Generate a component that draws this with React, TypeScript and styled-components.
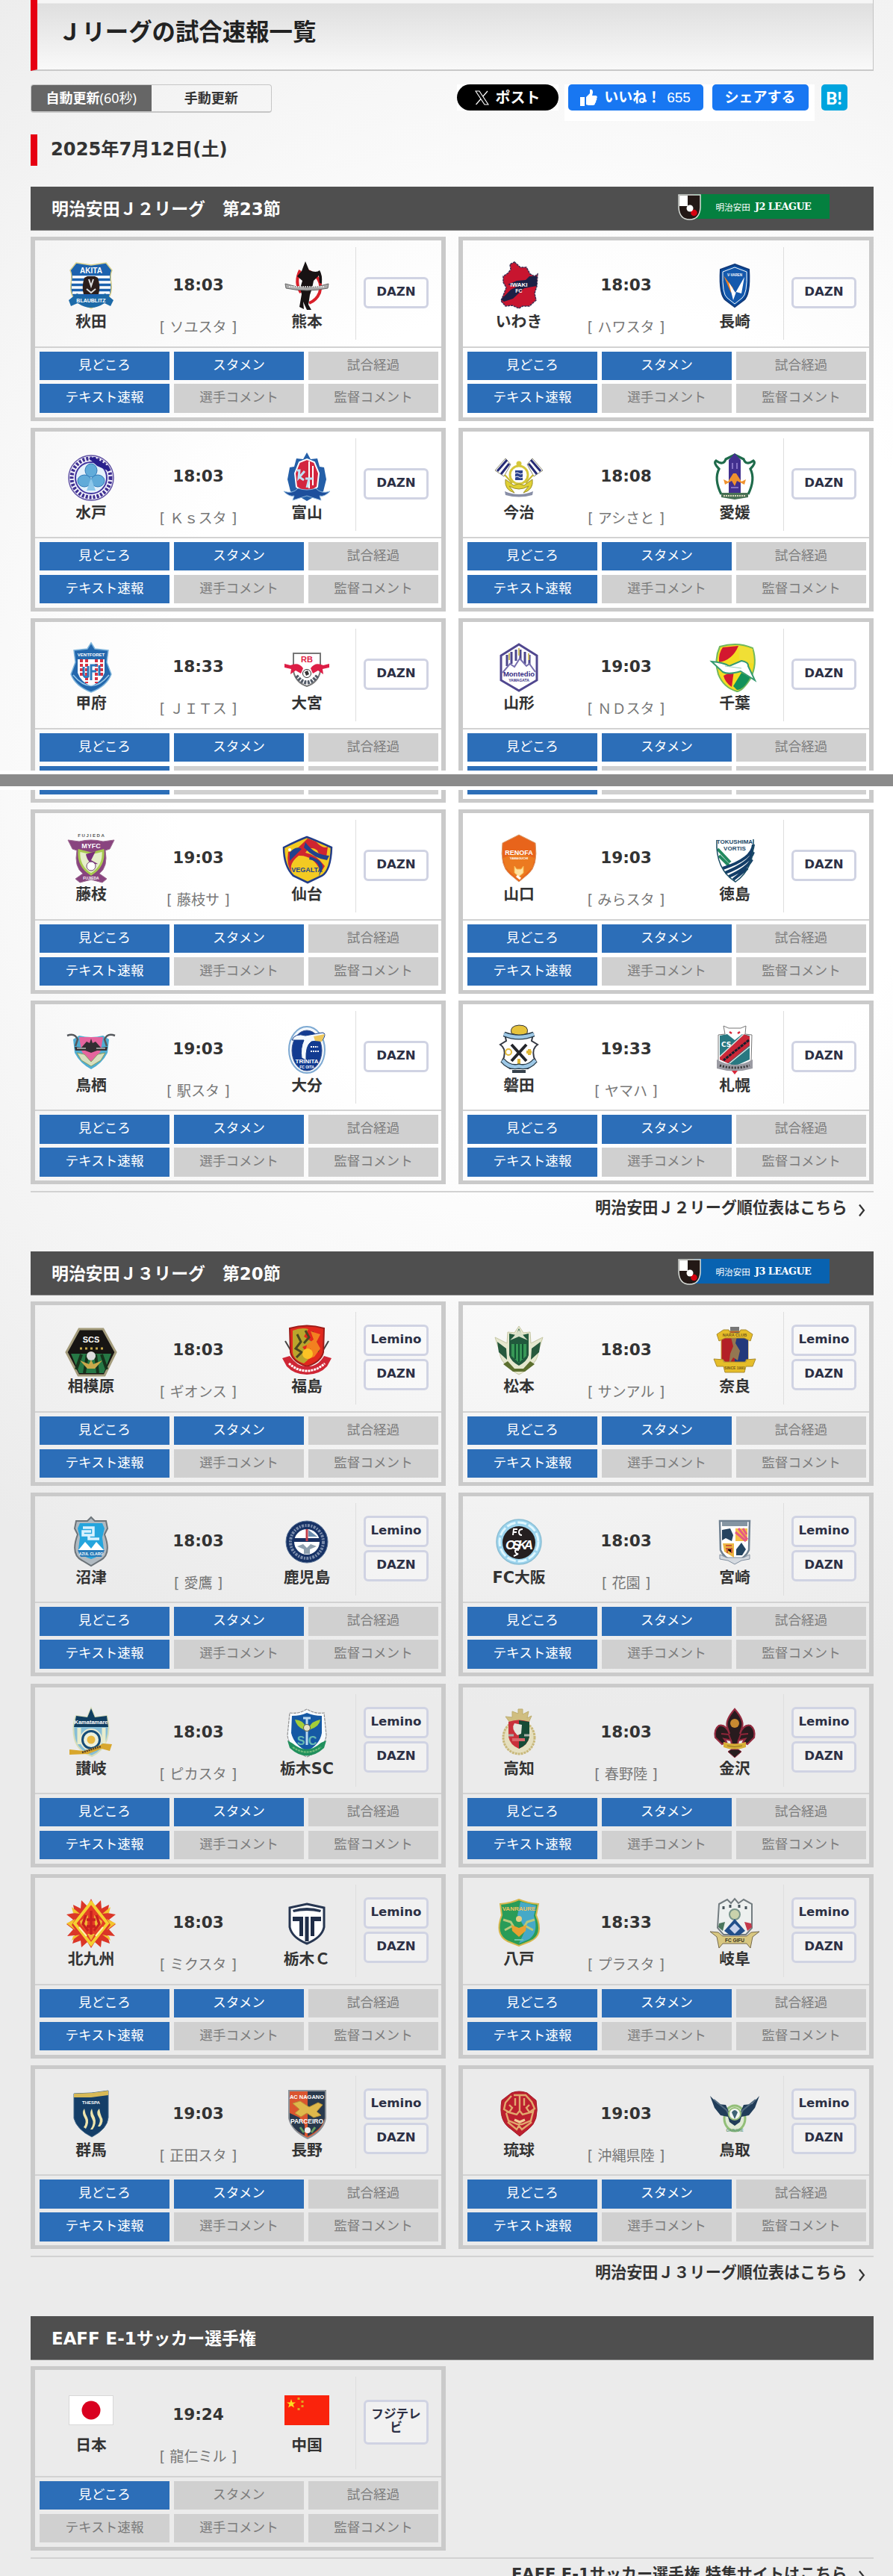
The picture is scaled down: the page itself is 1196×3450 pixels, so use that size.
import React from 'react';
import styled, { createGlobalStyle } from 'styled-components';

// Global styles
const GlobalStyle = createGlobalStyle`
  * {
    box-sizing: border-box;
  }

  body {
    margin: 0;
    font-family: 'DejaVu Sans', 'Noto Sans CJK JP', sans-serif;
    color: #333;
    background: #ebebeb;
  }
`;

const Page = styled.div`
  position: relative;
  height: 3450px;
  overflow: hidden;
  padding: 0 26.5px 0 41px;
  background: radial-gradient(ellipse 1280px 1330px at 760px 960px, #fff 0%, #fff 42%, #ebebeb 100%);
`;

const TitleBar = styled.header`
  height: 95px;
  padding-top: 5px;
  border-left: 9px solid #e60012;
  border-right: 1px solid #c4c4c4;
  border-bottom: 2px solid #c9c9c9;
  background: linear-gradient(#f6f6f6 0, #f6f6f6 4px, #dfdfdf 5px, #ececec 50px, #f9f9f9 100%);
`;

const Title = styled.h1`
  margin: 0;
  padding-left: 28px;
  font-size: 31.4px;
  line-height: 76px;
  font-weight: bold;
  color: #222;
`;

const Toolbar = styled.div`
  display: flex;
  justify-content: space-between;
  align-items: flex-start;
  height: 38px;
  margin-top: 18px;
  padding-right: 35px;
`;

const Toggle = styled.div`
  display: flex;
  width: 323px;
  height: 38px;
  border: 1px solid #c6c6c6;
  border-bottom-width: 2px;
  border-radius: 4px;
  overflow: hidden;
`;

const ToggleItem = styled.div<{ $active?: boolean }>`
  flex: 1;
  text-align: center;
  font-size: 18px;
  line-height: 35px;
  font-weight: bold;
  background: ${({ $active }) => ($active ? '#666' : 'transparent')};
  color: ${({ $active }) => ($active ? '#fff' : '#333')};

  span {
    font-family: 'Noto Sans', 'Noto Sans CJK JP', sans-serif;
    font-weight: normal;
  }
`;

const Shares = styled.div`
  display: flex;
  align-items: flex-start;
`;

const PostBack = styled.div`
  background: #fff;
  margin-right: 8px;
`;

const PostButton = styled.div`
  display: flex;
  align-items: center;
  gap: 9px;
  width: 136px;
  height: 35px;
  padding-left: 24px;
  border-radius: 18px;
  background: #000;
  color: #fff;
  font-size: 20px;
  font-weight: bold;
  line-height: 32px;
`;

const FacebookBack = styled.div`
  display: flex;
  align-items: flex-start;
  gap: 12px;
  width: 335px;
  height: 49px;
  padding-left: 5px;
  margin-right: 9px;
  background: #fff;
`;

const FacebookButton = styled.div<{ $width: number }>`
  display: flex;
  align-items: center;
  justify-content: center;
  width: ${({ $width }) => $width}px;
  height: 35px;
  border-radius: 5px;
  background: #1877f2;
  color: #fff;
  font-size: 19px;
  font-weight: bold;
  line-height: 33px;

  svg {
    margin-right: 9px;
  }

  em {
    margin-left: 8px;
    font: normal 19px 'Liberation Sans', sans-serif;
  }
`;

const Hatena = styled.div`
  width: 35px;
  height: 35px;
  border-radius: 5px;
  background: #00a4de;
  color: #fff;
  text-align: center;
  font: 900 23px/36px 'Lato', 'Liberation Sans', sans-serif;
`;

const DateHeading = styled.h2`
  margin: 29px 0 28px;
  padding-left: 18px;
  height: 42px;
  border-left: 9px solid #e60012;
  font-size: 24.2px;
  line-height: 41px;
  font-weight: bold;
`;

const Section = styled.section`
  height: 1426.2px;
`;

const SectionHeader = styled.h3`
  display: flex;
  align-items: center;
  justify-content: space-between;
  height: 59px;
  margin: 0 0 8px;
  padding: 0 59px 3px 28px;
  background: #4f4f4f;
  border-bottom: 1px solid #888;
  color: #fff;
  font-size: 22.9px;
  font-weight: bold;
`;

const LeagueBadge = styled.div<{ $color: string }>`
  display: flex;
  align-items: center;
  width: 203px;
  height: 36px;

  svg {
    flex: none;
    position: relative;
    z-index: 1;
    margin-right: -10px;
  }

  div {
    flex: 1;
    display: flex;
    align-items: center;
    gap: 6px;
    height: 33px;
    margin-top: -2px;
    padding-left: 30px;
    background: ${({ $color }) => $color};
    font-size: 11.6px;
    font-weight: normal;
    white-space: nowrap;
  }

  b {
    font: bold 12.8px 'DejaVu Serif', serif;
    letter-spacing: -0.5px;
  }
`;

const Cards = styled.div`
  display: grid;
  grid-template-columns: 556px 556px;
  column-gap: 17px;
  row-gap: 9.2px;
`;

const Card = styled.article`
  height: 246.5px;
  border: solid #cacaca;
  border-width: 5px 6px;
`;

const Summary = styled.div`
  display: flex;
  height: 143.5px;
  padding-left: 10px;
  border-bottom: 2px solid #d2d2d2;
`;

const Team = styled.div`
  width: 130px;
  padding-top: 28px;
  text-align: center;
  font-size: 20.8px;
  line-height: 30px;
  font-weight: bold;
  white-space: nowrap;

  svg {
    display: block;
    margin: 0 auto;
    overflow: visible;
  }
`;

const Kickoff = styled.div`
  width: 157px;
  margin-right: 2px;
  padding-top: 45px;
  text-align: center;
`;

const Time = styled.div`
  font-size: 21.6px;
  line-height: 30px;
  font-weight: bold;
`;

const Venue = styled.div`
  margin-top: 27px;
  color: #777;
  font-size: 19.1px;
  line-height: 30px;
  white-space: nowrap;
`;

const Broadcasts = styled.div`
  display: flex;
  flex-direction: column;
  justify-content: center;
  gap: 4px;
  width: 114px;
  height: 124px;
  margin-top: 9px;
  padding: 0 16px 2px 10px;
  border-left: 1px solid #dedede;
`;

const Broadcaster = styled.div`
  padding: 8px 4px 10px;
  border: 3px solid #d0d3e3;
  border-radius: 6px;
  background: rgba(255, 255, 255, 0.3);
  color: #2c3045;
  text-align: center;
  font-size: 16.6px;
  line-height: 18px;
  font-weight: bold;
`;

const Tabs = styled.div`
  display: grid;
  grid-template-columns: repeat(3, 1fr);
  grid-auto-rows: 38.3px;
  gap: 5.7px 6px;
  padding: 5px 4px 0 6px;
`;

const Tab = styled.div<{ $active: boolean }>`
  text-align: center;
  font-size: 17.6px;
  line-height: 36px;
  background: ${({ $active }) => ($active ? '#2c6eb8' : '#d0d0d0')};
  color: ${({ $active }) => ($active ? '#fff' : '#7c7c7c')};
`;

const MoreLink = styled.div`
  display: flex;
  align-items: center;
  justify-content: flex-end;
  gap: 14px;
  margin-top: 9px;
  padding: 5px 11px 0 0;
  border-top: 2px solid #d2d2d2;
  font-size: 21.1px;
  line-height: 32px;
  font-weight: bold;

  svg {
    margin-top: 6px;
  }
`;

// Strip laid over the third row of cards
const PageBreak = styled.div`
  position: absolute;
  left: 0;
  right: 0;
  top: 1032px;
  height: 26px;
  border: solid #fff;
  border-width: 5px 0;
  background: #8b8b8b;
`;

const Word: React.FC<{ y: number; size?: number; fill?: string; children: string }> = ({ y, size = 8, fill = '#fff', children }) => (
  <text x="33" y={y} textAnchor="middle" fontFamily="Liberation Sans, sans-serif" fontWeight="bold" fontSize={size} fill={fill}>
    {children}
  </text>
);

const crests: Record<string, React.ReactNode> = {
  秋田: (
    <>
      <path d="M13 2L33 5L53 2L61 12Q58 18 60 30Q62 48 50 54L33 63L16 54Q4 48 6 30Q8 18 5 12Z" fill="#1c62ae" stroke="#d8cf8a" strokeWidth="1.5" />
      <path d="M8 21H58M7 28H59M7 35H59M8 42H58" stroke="#fff" strokeWidth="3.5" />
      <path d="M24 22L28 20H38L42 22Q46 34 43 44H23Q20 34 24 22" fill="#2b1d1a" />
      <path d="M30 24L33 33L36 24M27 37L33 42L39 37" stroke="#ddd" strokeWidth="2" fill="none" />
      <path d="M3 52L14 43Q33 53 52 43L63 52L59 60L51 56Q33 68 15 56L6 60Z" fill="#1d6aa8" />
      <Word y={16} size={10}>AKITA</Word>
      <Word y={55} size={7}>BLAUBLITZ</Word>
    </>
  ),
  熊本: (
    <>
      <path d="M24 12Q16 28 25 42M33 12Q56 22 50 42Q46 52 36 56" fill="none" stroke="#d91f2a" strokeWidth="4" />
      <path d="M31 0L36 12Q46 16 50 12Q54 18 53 30L50 29L49 19L42 26L40 36L37 45L35 58L39 65H33L28 54L29 64L23 61L26 44L24 36L27 26L20 20L26 13Z" fill="#171213" />
      <path d="M4 30Q33 40 62 30L61 36Q33 42 5 36Z" fill="#aaa" stroke="#666" />
      <path d="M9 34H57" stroke="#eee" strokeWidth="1.5" strokeDasharray="2 1" />
    </>
  ),
  いわき: (
    <>
      <path d="M27 1L35 8H43L48 17L54 20L58 17L57 33L54 43L56 52L47 60L38 60L33 63L24 59L15 60L9 53L13 43L16 35L12 28L12 20L18 16L22 11L21 4Z" fill="#c8152f" stroke="#3b3155" strokeWidth="1.5" strokeDasharray="3 1" />
      <path d="M9 51L22 38L30 34L18 31L30 26L42 25L47 20L57 20V33L40 36L25 50L13 54Z" fill="#1c2045" />
      <Word y={34} size={8}>IWAKI</Word>
      <Word y={42} size={7}>FC</Word>
    </>
  ),
  長崎: (
    <>
      <path d="M33 4L52 11Q54 45 45 52L33 61L21 52Q12 45 14 11Z" fill="#0a4fa2" stroke="#123a7a" strokeWidth="2" />
      <path d="M33 8L49 14Q50 44 43 49L33 57L23 49Q16 44 17 14Z" fill="#1459ad" stroke="#fff" strokeWidth="1" />
      <path d="M18 19L31 36L28 42Z" fill="#f07f1f" />
      <path d="M25 28L34 42L46 21L42 43L35 41L31 52Z" fill="#fff" />
      <Word y={20} size={4.5}>V·VAREN</Word>
    </>
  ),
  水戸: (
    <>
      <circle cx="33" cy="34" r="30" fill="#f3f2fb" stroke="#6153a4" strokeWidth="1.5" />
      <circle cx="33" cy="34" r="26" fill="none" stroke="#3e2f91" strokeWidth="5" strokeDasharray="3 2" />
      <circle cx="33" cy="34" r="21" fill="#e5f1fb" stroke="#4336a0" strokeWidth="2" />
      <g fill="#61abd9" stroke="#2f79b8" strokeWidth="1">
        <ellipse cx="33" cy="24" rx="8" ry="9" />
        <ellipse cx="24" cy="38" rx="9" ry="8" />
        <ellipse cx="42" cy="38" rx="9" ry="8" />
      </g>
      <path d="M33 34L27 51H39Z" fill="#8dc8ea" />
      <path d="M37 6L58 20L57 25L41 18L30 8Z" fill="#281f8d" />
    </>
  ),
  富山: (
    <>
      <path d="M33 0L38 9L47 8L50 19L56 20L59 36L55 52L33 65L11 52L7 36L10 20L16 19L19 8L28 9Z" fill="#245fa8" />
      <path d="M33 9L43 13L49 28L47 46L33 56L19 46L17 28L23 13Z" fill="#d3263f" stroke="#fff" strokeWidth="2" />
      <path d="M36 12V48M41 18V44" stroke="#fff" strokeWidth="2" />
      <path d="M20 24L23 24L22 34L30 25M23 33L29 37M31 35H41M36 35L33 47" fill="none" stroke="#bfe2f5" strokeWidth="3" />
      <path d="M2 52Q14 56 21 48Q33 52 45 48Q52 56 64 52Q56 60 50 58L52 64L33 58L14 64L16 58Q10 60 2 52" fill="#1d4f9c" stroke="#8cb6dc" />
    </>
  ),
  今治: (
    <>
      <path d="M1 24L15 8L22 16L13 32ZM65 24L51 8L44 16L53 32Z" fill="#fff" stroke="#8b8970" strokeWidth="1" />
      <path d="M4 25L17 10M9 29L20 15M62 25L49 10M57 29L46 15" stroke="#262b75" strokeWidth="3" />
      <path d="M14 30L24 41M52 30L42 41" stroke="#c6b62c" strokeWidth="2" />
      <circle cx="33" cy="30" r="12" fill="#fff" stroke="#d6c73a" strokeWidth="3" />
      <path d="M28 24H38V37H28Z" fill="#2c438e" />
      <path d="M28 28Q31 26 33 28T38 28M28 33Q31 31 33 33T38 33" stroke="#fff" fill="none" />
      <path d="M15 36Q13 50 27 54L20 45Q33 53 46 45L39 54Q53 50 51 36L40 44L33 42L26 44Z" fill="#e0d034" stroke="#9c902a" />
      <path d="M14 52Q33 60 52 52L51 57Q33 62 15 57Z" fill="#888ea6" />
      <circle cx="33" cy="15" r="3.5" fill="#d6c73a" />
    </>
  ),
  愛媛: (
    <>
      <path d="M15 13L22 10L33 2L44 10L51 13Q44 36 50 56H16Q22 36 15 13Z" fill="#fff" />
      <path d="M15 56Q5 36 12 22Q4 14 8 11Q18 18 21 9L33 3L45 9Q48 18 58 11Q62 14 54 22Q61 36 51 56" fill="none" stroke="#1f6b4b" strokeWidth="3.2" />
      <path d="M25 10L33 1L41 10V55H25Z" fill="#42308f" />
      <path d="M30 14V22M36 14V22M28 47H38" stroke="#8572c4" strokeWidth="2" />
      <path d="M18 36L24 39L31 28H35L42 39L48 36L46 43L36 38L33 45L29 38L20 43Z" fill="#f0922e" />
      <path d="M15 54H51V60L33 63L15 60Z" fill="#4a7256" />
      <path d="M18 58H48" stroke="#d8d6b8" strokeWidth="2" strokeDasharray="2 1" />
    </>
  ),
  甲府: (
    <>
      <path d="M33 0L38 8L56 10L54 26L60 42Q54 58 33 66Q12 58 6 42L12 26L10 10L28 8Z" fill="#2468ad" stroke="#7fb5dc" strokeWidth="1.5" />
      <path d="M15 22H51V40Q47 52 33 58Q19 52 15 40Z" fill="#fff" />
      <path d="M20 22V46M27 22V54M40 22V54M47 22V46" stroke="#d83344" strokeWidth="4" strokeDasharray="4 2" />
      <path d="M23 32V43Q24 47 29 45V31M33 50V30H41M33 38H40M44 30V44" fill="none" stroke="#2a77bd" strokeWidth="3" />
      <path d="M9 43Q33 72 57 43" fill="none" stroke="#9dcbea" strokeWidth="1.5" />
      <Word y={18} size={6}>VENTFORET</Word>
    </>
  ),
  大宮: (
    <>
      <path d="M15 14H51V38Q48 53 33 58Q18 53 15 38Z" fill="#fff" stroke="#777" strokeWidth="2" />
      <Word y={26} size={11} fill="#e02246">RB</Word>
      <path d="M3 28L11 30Q22 25 28 34L25 41L18 37L11 42L12 35L3 33ZM63 28L55 30Q44 25 38 34L41 41L48 37L55 42L54 35L63 33Z" fill="#dd1e46" />
      <circle cx="33" cy="41" r="5.5" fill="#fff" stroke="#333" />
      <path d="M30 39L34 37L36 42L32 44Z" fill="#333" />
      <path d="M19 44Q33 62 47 44" fill="none" stroke="#535b68" strokeWidth="5" strokeDasharray="3 1.5" />
    </>
  ),
  山形: (
    <>
      <path d="M33 2L57 17V50L33 64L9 50V17Z" fill="#fff" stroke="#50478f" strokeWidth="3" />
      <path d="M17 16V31M23 12V28M29 9V24M35 9V24M41 12V28M47 16V31" stroke="#4c468c" strokeWidth="3" />
      <path d="M20 14V23M33 7V17M46 14V23" stroke="#cdbc68" strokeWidth="2" />
      <path d="M11 40L21 28L27 32L34 21L43 31L47 28L55 39" fill="#fff" stroke="#776fae" strokeWidth="2" />
      <Word y={45} size={9.5} fill="#382d83">Montedio</Word>
      <Word y={52} size={5} fill="#382d83">YAMAGATA</Word>
    </>
  ),
  千葉: (
    <>
      <path d="M13 5Q37-2 57 7Q64 28 54 48Q43 65 36 65Q18 60 11 42Q5 23 13 5Z" fill="#f4dd22" stroke="#70b85d" strokeWidth="2" />
      <path d="M17 6L38 4Q30 23 12 26Q11 14 17 6Z" fill="#d3182f" />
      <path d="M38 4L57 8L58 28L39 22Z" fill="#f0df35" />
      <path d="M18 44L32 37L29 59Q20 53 18 44Z" fill="#d3182f" />
      <path d="M31 58L42 40L54 46Q45 63 36 63Z" fill="#13925a" />
      <path d="M2 25Q17 26 26 31L42 24Q52 26 51 31L60 50L41 38Q25 43 17 39Z" fill="#fff" stroke="#369a70" strokeWidth="2" />
      <path d="M20 31L42 34" stroke="#9bceb6" />
    </>
  ),
  藤枝: (
    <>
      <Word y={4} size={6} fill="#555">F U J I E D A</Word>
      <path d="M17 10Q33 6 49 10L64 8L58 20L52 22Q56 44 44 53L54 60L48 65L33 61L18 65L12 60L22 53Q10 44 14 22L8 20L2 8Z" fill="#89447f" stroke="#9d6b92" />
      <path d="M17 22L33 26L49 22Q51 43 33 54Q15 43 17 22Z" fill="#e6efca" stroke="#a8ca51" strokeWidth="3" />
      <path d="M26 27L39 23L33 35L42 40Q29 42 26 27" fill="#7a2f7b" />
      <circle cx="33" cy="43" r="6" fill="#fff" stroke="#704073" />
      <Word y={19} size={9}>MYFC</Word>
      <Word y={61} size={5}>FUJIEDA</Word>
    </>
  ),
  仙台: (
    <>
      <path d="M2 18Q22 8 33 4Q44 8 66 18Q65 49 53 56L34 65L15 56Q2 43 2 18Z" fill="#f3ca22" stroke="#223c88" strokeWidth="2.5" />
      <path d="M8 24L16 23Q26 14 34 6L45 10Q55 21 61 17L59 31Q48 28 47 22Q38 15 31 25Q45 27 57 43L52 51Q42 28 22 29Q8 40 13 51Q5 42 8 24Z" fill="#cf2530" />
      <path d="M10 25Q18 15 26 20L10 36M31 11Q43 28 63 29L60 35Q43 33 29 18M37 30Q56 36 54 46L49 57Q54 37 36 34" fill="#21428d" />
      <Word y={51} size={9} fill="#21428d">VEGALTA</Word>
      <circle cx="10" cy="21" r="2" fill="#fff" />
    </>
  ),
  山口: (
    <>
      <path d="M33 1L55 12Q59 43 45 54L33 64L21 54Q7 43 11 12Z" fill="#e8641b" stroke="#d99a6a" strokeWidth="1" />
      <path d="M12 32L33 25L54 32L51 45L33 62L15 45Z" fill="#ec7a20" />
      <Word y={28} size={9}>RENOFA</Word>
      <Word y={34} size={4}>YAMAGUCHI</Word>
      <path d="M27 43L30 47H36L39 43V52L33 57L27 52Z" fill="#ffe2a0" stroke="#f6b84c" />
      <path d="M30 56L35 60" stroke="#fff" strokeWidth="3" />
    </>
  ),
  徳島: (
    <>
      <path d="M9 7Q33 10 58 7Q60 46 34 64Q9 49 9 7Z" fill="#fff" />
      <path d="M10 20L27 38M12 29L25 42" stroke="#22895e" strokeWidth="4" />
      <path d="M58 14Q57 33 17 46M58 24Q53 39 20 52M56 34Q50 46 25 57M50 46L31 61" fill="none" stroke="#143e68" strokeWidth="4" />
      <path d="M9 8Q7 47 34 64Q60 46 58 7" fill="none" stroke="#1c4e65" strokeWidth="1.5" />
      <Word y={13} size={8} fill="#1b4867">TOKUSHIMA</Word>
      <Word y={22} size={8} fill="#1b4867">VORTIS</Word>
    </>
  ),
  鳥栖: (
    <>
      <path d="M9 19L17 14Q33 18 49 14L57 19L55 37Q48 51 33 59Q18 51 11 37Z" fill="#50add2" />
      <path d="M17 16H49L46 34Q41 45 33 49Q25 45 20 34Z" fill="#e5649e" />
      <path d="M14 37L24 39L33 49L42 39L52 37L46 47L33 55L20 47Z" fill="#d8dfbf" stroke="#849f63" />
      <path d="M1 14Q11 10 15 19L12 28M65 14Q55 10 51 19L54 28" fill="none" stroke="#55585c" strokeWidth="2.5" />
      <path d="M11 29L20 30L27 22L31 24L33 18L35 24L39 22L46 30L55 29L54 34L41 34L33 37L25 34L12 34Z" fill="#332e33" />
      <path d="M14 31H26M40 31H52" stroke="#bbb" strokeWidth="1.5" />
    </>
  ),
  大分: (
    <>
      <ellipse cx="33" cy="33" rx="24" ry="31" fill="#f3f8fd" stroke="#7da9d2" strokeWidth="2" />
      <ellipse cx="33" cy="34" rx="20" ry="27" fill="#123b91" stroke="#344f8e" />
      <path d="M13 20Q17 10 31 14L54 10Q60 11 54 20L39 22Q31 27 32 47L26 44Q24 31 29 20Z" fill="#f3f9ff" stroke="#153d88" />
      <path d="M42 15L57 12L53 22L44 21Z" fill="#edc75b" />
      <Word y={51} size={8}>TRINITA</Word>
      <Word y={58} size={5}>FC OITA</Word>
      <path d="M38 29H48M38 35H50" stroke="#fff" strokeWidth="2" strokeDasharray="2 1" />
    </>
  ),
  磐田: (
    <>
      <path d="M23 11Q20 1 33 0Q47 0 44 11L34 14Z" fill="#e6c33c" stroke="#333" />
      <path d="M14 12Q33 18 52 12L50 21L58 26Q50 31 53 43L56 49L45 58H21L10 49L13 43Q16 31 8 26L16 21Z" fill="#fff" stroke="#353943" strokeWidth="2" />
      <path d="M23 26L43 48M43 26L23 48" stroke="#23252b" strokeWidth="4" />
      <circle cx="19" cy="36" r="4" fill="none" stroke="#e0b838" strokeWidth="2" />
      <path d="M43 36L50 36M47 32V40M33 45V52" stroke="#e0b838" strokeWidth="4" />
      <path d="M13 12Q33 20 53 12M11 47Q20 58 33 55Q46 58 55 47" fill="none" stroke="#263947" strokeWidth="7" />
      <path d="M13 12Q33 20 53 12M11 47Q20 58 33 55Q46 58 55 47" fill="none" stroke="#9dc8e6" strokeWidth="4.5" />
      <path d="M24 62H42" stroke="#35404a" strokeWidth="4" />
    </>
  ),
  札幌: (
    <>
      <path d="M18 1L25 4H41L48 1L47 12L56 13L55 50L33 59L11 50V13L20 12Z" fill="#fff" stroke="#777" />
      <path d="M13 14L23 12L33 20L43 12L53 14V46L33 55L13 46Z" fill="#287881" />
      <path d="M45 12L53 15V27L24 51L13 46V42Z" fill="#ca2737" />
      <path d="M52 20L18 47" stroke="#161f2d" strokeWidth="3" strokeDasharray="4 1" />
      <path d="M13 42L45 12M26 51L53 29" stroke="#d9e2df" strokeWidth="1.5" />
      <path d="M26 9L29 11M40 9L37 11" stroke="#d92739" strokeWidth="2.5" />
      <path d="M9 46Q33 60 57 46V58Q33 65 9 58Z" fill="#9b9ba3" />
      <path d="M13 54Q33 60 53 54" fill="none" stroke="#333" strokeWidth="3" strokeDasharray="2 2" />
      <path d="M29 61L33 66L37 61Z" fill="#d92739" />
      <text x="15" y="29" fontSize="9" fill="#fff" fontWeight="bold">CS</text>
    </>
  ),
  相模原: (
    <>
      <path d="M17 4H49L66 35L51 66H16L0 35Z" fill="#171513" stroke="#a49c7c" strokeWidth="3" />
      <path d="M12 37H54L60 37L50 63H17L6 37Z" fill="#267845" />
      <path d="M20 38L13 58M28 38L24 63M39 38L42 63M47 38L54 58" stroke="#16331c" strokeWidth="4" />
      <circle cx="33" cy="40" r="6" fill="#ddd" />
      <path d="M18 46L30 51L33 45L36 51L48 46L38 57H28Z" fill="#c9a94b" />
      <path d="M18 30H49" stroke="#c9a94b" strokeWidth="3" strokeDasharray="3 4" />
      <Word y={22} size={11}>SCS</Word>
    </>
  ),
  福島: (
    <>
      <path d="M4 20L14 37M62 20L52 37" stroke="#444" strokeWidth="2" />
      <path d="M10 3Q33-4 56 3L55 35Q52 48 33 54Q14 48 11 35Z" fill="#e1281d" stroke="#9c1d1a" strokeWidth="2" />
      <path d="M14 6Q26 1 35 4L29 14L41 22L27 28L38 42L29 50Q14 45 14 34Z" fill="#baa52c" />
      <path d="M20 11L25 21L18 30L26 35L19 42M31 6L36 15L29 23M40 8Q48 19 43 30L49 34" fill="none" stroke="#4b4820" strokeWidth="3" />
      <path d="M38 7L51 11L46 21L51 30L43 41L33 45L38 30L31 35L33 25L42 18Z" fill="#f38020" />
      <circle cx="34" cy="37" r="7" fill="#fbc326" />
      <path d="M0 43L10 40Q21 55 33 54Q47 55 56 40L66 43L60 54Q50 65 33 65Q16 65 6 54Z" fill="#cf2635" />
      <path d="M9 50Q20 60 33 60Q46 60 57 50" fill="none" stroke="#fff" strokeWidth="3" strokeDasharray="3 1" />
    </>
  ),
  松本: (
    <>
      <path d="M33 0L39 9L48 8L49 23L65 15L59 34Q58 48 47 54L40 61L33 65L26 61L19 54Q8 48 7 34L1 15L17 23L18 8L27 9Z" fill="#e5e7ce" stroke="#c6c7a5" />
      <path d="M33 3L37 12L46 10V39Q44 47 33 53Q22 47 20 39V10L29 12Z" fill="#21593d" />
      <path d="M33 5L40 14L45 19L33 14L21 19L26 14Z" fill="#d8e0c8" />
      <path d="M23 24H43V40L33 49L23 40Z" fill="#379756" />
      <path d="M28 24V44M33 24V48M38 24V44" stroke="#115232" strokeWidth="2" />
      <path d="M4 21L16 30L17 45L6 35ZM62 21L50 30L49 45L60 35Z" fill="#27593d" />
      <path d="M12 51L18 47L27 57H39L48 47L54 51L41 61H25Z" fill="#5c6f2f" />
    </>
  ),
  奈良: (
    <>
      <path d="M27 1H39V9L33 13L27 9Z" fill="#777" />
      <path d="M15 7H51V44L33 58L15 44Z" fill="#b32026" stroke="#c69c2f" />
      <path d="M33 8H51V44L33 58Z" fill="#23397c" />
      <path d="M28 15L36 14L34 23L40 33L37 46L31 42L25 52L27 37L31 27Z" fill="#947751" />
      <path d="M9 11L18 5H25L27 9H39L41 5H48L57 11L54 20L46 16H20L12 20Z" fill="#e5bd29" stroke="#a98b30" />
      <path d="M5 44L18 45V48H48V45L61 44L57 54L48 54L46 62H20L18 54L9 54Z" fill="#e5bd29" stroke="#a98b30" />
      <Word y={14} size={5.5} fill="#75591c">NARA CLUB</Word>
      <Word y={58} size={5} fill="#75591c">SINCE 1991</Word>
    </>
  ),
  沼津: (
    <>
      <path d="M33 0L38 5L53 5L55 15L51 23Q61 50 45 58L33 65L21 58Q5 50 15 23L11 15L13 5L28 5Z" fill="#b1bac1" stroke="#6d7479" strokeWidth="2" />
      <path d="M18 8H48L51 15L48 27L50 43Q46 52 33 56Q20 52 16 43L18 27L15 15Z" fill="#25a5dd" />
      <path d="M22 14H36V24H22V19H33M30 24V29H44" fill="none" stroke="#d9f2ff" strokeWidth="3.5" />
      <path d="M16 44L25 33L33 42L40 33L50 44Z" fill="#fff" />
      <path d="M15 44H51L47 53H19Z" fill="#297ab7" />
      <Word y={51} size={5}>AZUL CLARO</Word>
    </>
  ),
  鹿児島: (
    <>
      <circle cx="33" cy="33" r="28" fill="#173265" stroke="#5a7397" />
      <circle cx="33" cy="33" r="17" fill="#fff" />
      <path d="M16 28H50V33H16Z" fill="#182f60" />
      <path d="M33 16V32" stroke="#c13c48" strokeWidth="3" />
      <path d="M35 17L47 26H35Z" fill="#6b8cad" />
      <path d="M20 39L28 36L33 41L38 36L46 39L37 43V49H29V43Z" fill="#8e9fae" />
      <circle cx="33" cy="33" r="22" fill="none" stroke="#ccd6e3" strokeWidth="4" strokeDasharray="3 1.5 2 1.5" opacity=".55" />
    </>
  ),
  FC大阪: (
    <>
      <circle cx="33" cy="33" r="30" fill="#9bd3ed" stroke="#8abed4" strokeWidth="1.5" />
      <circle cx="33" cy="33" r="26" fill="none" stroke="#dff7ff" strokeWidth="3" strokeDasharray="12 3" />
      <circle cx="33" cy="34" r="22" fill="#251f20" />
      <path d="M25 16H31M26 16L25 24M25 20H30M38 16Q33 16 33 20T37 24" fill="none" stroke="#fff" strokeWidth="2" />
      <text x="15" y="43" fontSize="17" fontWeight="bold" fontStyle="italic" fill="#fff" textLength="37" fontFamily="Liberation Sans">OSKA</text>
      <path d="M33 44Q27 43 28 46T31 49T26 52" fill="none" stroke="#fff" strokeWidth="2" />
    </>
  ),
  宮崎: (
    <>
      <path d="M13 5H53L52 44Q48 54 33 61Q18 54 14 44Z" fill="#fff" stroke="#718292" strokeWidth="2.5" />
      <path d="M16 6H50V12H16Z" fill="#8595a2" />
      <path d="M16 17L27 15L31 24L29 32L21 28L16 31Z" fill="#25435f" />
      <path d="M34 15H50V32H34Z" fill="#f4c047" />
      <path d="M38 15L50 30M44 15L49 23M34 20L48 32" stroke="#e55a83" strokeWidth="3" />
      <path d="M17 35H32V54L19 46Z" fill="#ecb642" />
      <path d="M21 38H29M21 42H29V48M23 42V48" stroke="#c75a37" strokeWidth="2" />
      <path d="M35 43L42 34L48 43L43 51H35Z" fill="#244561" />
      <path d="M13 50L22 54H45L53 50V56L42 58L33 63L24 58L13 56Z" fill="#d5dae0" stroke="#8290a0" />
    </>
  ),
  讃岐: (
    <>
      <path d="M33 0L38 12L54 10Q59 26 54 42Q49 57 34 64Q15 57 11 41Q7 24 13 10L28 12Z" fill="#86bed7" stroke="#d6ddb9" strokeWidth="2" />
      <path d="M33 0L38 12L54 10L56 25H10L13 10L28 12Z" fill="#103e61" />
      <path d="M17 26V48M50 26V47" stroke="#e9eccc" strokeWidth="5" />
      <circle cx="33" cy="42" r="14" fill="#164b77" stroke="#e9ead3" strokeWidth="2" />
      <circle cx="33" cy="42" r="10" fill="#edf0dd" />
      <circle cx="33" cy="42" r="5.5" fill="#eab943" />
      <path d="M4 55L23 57Q41 52 49 47L61 48L58 57L47 54L29 61L4 62Z" fill="#d8a72d" />
      <path d="M21 59L46 51" stroke="#513c27" strokeWidth="2.5" strokeDasharray="2 1" />
      <Word y={21} size={7.5}>Kamatamare</Word>
    </>
  ),
  栃木SC: (
    <>
      <path d="M10 6Q22 8 33 1Q44 8 56 6L59 36Q57 54 33 65Q9 54 7 36Z" fill="#f7fbff" stroke="#909090" strokeWidth="1.2" strokeDasharray="4 1" />
      <path d="M13 10Q25 10 33 6Q42 10 53 10V33Q50 49 33 57Q16 49 12 33Z" fill="#1559a4" />
      <path d="M17 15Q29 16 31 25L33 31L36 25Q40 17 51 15Q50 24 38 28L33 32L28 28Q19 24 17 15" fill="#a4ce38" />
      <path d="M33 13V49M28 13H38" stroke="#bad9ef" strokeWidth="3" />
      <circle cx="33" cy="26" r="4.5" fill="#e5e1ca" stroke="#635d46" />
      <Word y={49} size={16} fill="#66b9b2">S C</Word>
      <path d="M7 43L14 47Q33 63 52 46L59 43L56 53Q33 74 10 53Z" fill="#21905d" />
      <path d="M14 52Q33 65 52 52" fill="none" stroke="#72bd7d" strokeWidth="2" strokeDasharray="3 1" />
    </>
  ),
  高知: (
    <>
      <path d="M21 19L15 11L24 12V4L32 7V1H38V8L46 4L44 13L50 10L46 19Z" fill="#d0be81" stroke="#bdae70" />
      <ellipse cx="33" cy="39" rx="21" ry="22" fill="#e5dfbf" stroke="#c9b97c" strokeWidth="3" strokeDasharray="3 1" />
      <path d="M19 18Q33 13 47 18V38Q45 49 33 54Q21 49 19 38Z" fill="#c9313b" />
      <path d="M33 16L47 18V38Q45 49 33 54Z" fill="#174b36" />
      <path d="M27 20L37 22L36 34L31 36Q22 27 27 20" fill="#e4e5dd" />
      <path d="M19 36H26M40 36H47" stroke="#aab0aa" strokeWidth="3" />
      <path d="M24 42H41" stroke="#d9666b" strokeWidth="4" />
    </>
  ),
  金沢: (
    <>
      <path d="M33 1Q46 16 43 25L40 34Q45 21 54 23Q61 28 59 39L50 48L44 45L47 41L38 43L37 48H29L28 43L19 41L22 45L16 48L7 39Q5 28 12 23Q21 21 26 34L23 25Q20 16 33 1Z" fill="#281b1e" stroke="#942b40" strokeWidth="2.2" />
      <circle cx="33" cy="20" r="6" fill="#c88931" />
      <path d="M15 34L25 35L28 43M51 34L41 35L38 43" fill="none" stroke="#8d2539" strokeWidth="2" />
      <path d="M18 45Q33 50 48 45V52Q33 58 18 52Z" fill="#d6af36" />
      <path d="M23 50Q33 53 43 50" fill="none" stroke="#8e6d25" />
      <path d="M28 55L24 58L33 66L42 58L38 55Z" fill="#261d1e" stroke="#942b40" />
    </>
  ),
  北九州: (
    <>
      <path d="M33 0L38 10L46 2L47 13L57 8L55 19L66 21L57 28L66 34L57 41L65 50L55 49L58 60L47 56L46 65L38 58L33 66L28 58L20 65L19 56L8 60L11 49L1 50L9 41L0 34L9 28L0 21L11 19L9 8L19 13L20 2L28 10Z" fill="#db3627" />
      <path d="M0 33L12 27L7 35L12 42ZM66 33L54 27L59 35L54 42ZM7 11L18 20L9 19ZM59 11L48 20L57 19ZM7 56L18 48L9 50ZM59 56L48 48L57 50Z" fill="#f3c52e" />
      <path d="M33 5L55 33L33 61L11 33Z" fill="#e43d26" stroke="#f4d030" strokeWidth="4" />
      <path d="M18 30L29 22L27 43L19 34ZM48 30L37 22L39 43L47 34ZM28 47H38L33 56Z" fill="#f1b735" />
      <path d="M33 16V48M26 22L22 34L29 43M40 22L44 34L37 43M27 28H39M27 37H39" stroke="#c9201f" strokeWidth="3.5" fill="none" />
      <path d="M17 38L27 50M49 38L39 50" stroke="#fff2ad" strokeWidth="2" />
    </>
  ),
  栃木Ｃ: (
    <>
      <path d="M33 7L56 12V38Q53 52 33 60Q13 52 10 38V12Z" fill="#fff" stroke="#273651" strokeWidth="3" />
      <path d="M14 15Q33 9 52 15L51 18Q33 14 15 18Z" fill="#273651" />
      <path d="M14 24H28V50H23V30H14ZM30.500 24H35.500V57H30.500ZM38 24H52V30H43V50H38Z" fill="#202e48" />
    </>
  ),
  八戸: (
    <>
      <path d="M8 7Q22 6 33 1Q45 6 59 7L56 22Q67 49 48 57L33 63L18 57Q0 48 10 22Z" fill="#299c58" stroke="#d5b74c" strokeWidth="2" />
      <path d="M35 4L56 9L53 23Q60 44 47 54L33 60L42 41L31 22Z" fill="#46a9c7" />
      <path d="M12 28L22 31L25 36L14 42M54 28L44 31L41 36L52 42" fill="none" stroke="#b7c87b" strokeWidth="3" />
      <circle cx="33" cy="27" r="4" fill="#e2cf83" />
      <path d="M23 35L33 39L43 35L42 43L33 51L24 43Z" fill="#e8a030" />
      <Word y={16} size={8} fill="#f0c260">VANRAURE</Word>
      <path d="M27 55H39" stroke="#6dcaa7" strokeWidth="2" />
    </>
  ),
  岐阜: (
    <>
      <path d="M12 7L23 1L28 6L33 0L38 6L45 1L56 7V39L48 48H18L10 39Z" fill="#edf0ef" stroke="#737c80" strokeWidth="2" />
      <path d="M18 10V14M27 8V12M39 8V12M48 10V14" stroke="#46535b" strokeWidth="3" />
      <circle cx="33" cy="21" r="7" fill="#c9d2ac" stroke="#78948a" strokeWidth="2" />
      <path d="M12 33L20 31L17 43L11 38Z" fill="#4b765d" />
      <path d="M55 33L46 31L50 43L56 38Z" fill="#c4384a" />
      <path d="M33 27L47 43L39 49H27L19 43Z" fill="#214e8a" />
      <path d="M33 33L40 40L33 47L26 40Z" fill="#c7d2ec" />
      <path d="M0 44L11 45L17 50H49L55 45L66 44L57 51L54 66L49 60H17L12 66L9 51Z" fill="#d8c781" stroke="#75694c" />
      <Word y={58} size={6.5} fill="#393422">FC GIFU</Word>
    </>
  ),
  群馬: (
    <>
      <path d="M10 5L34 4L56 1V37Q55 52 34 63Q14 53 10 38Z" fill="#143e68" stroke="#3e6587" />
      <path d="M10 5L34 4L56 1V7L33 10H10Z" fill="#d7b957" />
      <Word y={19} size={6}>THESPA</Word>
      <path d="M23 50Q28 43 24 37Q20 30 24 25Q25 32 28 37Q31 43 26 52ZM32 53Q38 45 34 38Q30 31 34 25Q35 32 38 37Q41 45 35 53ZM42 49Q47 41 43 36Q39 30 44 25Q45 31 47 36Q51 42 45 49Z" fill="#eee4ad" />
    </>
  ),
  長野: (
    <>
      <path d="M9 1H58V38Q55 55 34 65Q13 55 9 38Z" fill="#da552f" stroke="#8b9298" strokeWidth="2" />
      <path d="M34 2H57V38Q53 53 34 62ZM10 31L23 37L30 47V61Q12 52 10 38Z" fill="#29394d" />
      <path d="M14 18L24 15L36 23L48 17L54 20L46 29L52 34L42 37L33 31L25 36L17 31L23 26Z" fill="#dfb84b" stroke="#b89337" />
      <Word y={12} size={7.5}>AC NAGANO</Word>
      <Word y={45} size={8.5}>PARCEIRO</Word>
      <circle cx="34" cy="54" r="4" fill="#eee" />
      <path d="M24 50L29 57M44 50L39 57" stroke="#68a063" strokeWidth="3" />
    </>
  ),
  琉球: (
    <>
      <path d="M23 4Q33 0 44 4L56 14Q61 42 45 53L34 62L23 53Q5 42 10 14Z" fill="#bd202f" stroke="#a41b27" />
      <path d="M26 7H42L50 16L54 25L47 30L43 24L47 20M23 8L15 17L13 26L20 30L24 24L20 20M16 29L30 33L34 28L38 33L52 29L49 41L37 46H31L19 41L16 31M18 43L30 53L33 48L37 53L50 43M34 8V27M28 11V21M40 11V21" fill="none" stroke="#e1a86d" strokeWidth="2.4" />
      <path d="M27 40L34 43L41 40" stroke="#f2cf97" strokeWidth="3" fill="none" />
    </>
  ),
  鳥取: (
    <>
      <ellipse cx="33" cy="38" rx="14" ry="17" fill="#e0ead6" stroke="#92bf78" strokeWidth="3" />
      <path d="M0 8L11 19L21 20L26 31L33 36L40 31L45 20L56 19L66 8L60 24L52 34L42 36L40 43L33 48L26 43L24 36L14 34L6 24Z" fill="#213d59" />
      <path d="M5 13L22 27L28 38M61 13L44 27L38 38" stroke="#526b80" strokeWidth="2" fill="none" />
      <circle cx="33" cy="32" r="8" fill="#f3f7f3" stroke="#97bf79" strokeWidth="2" />
      <path d="M29 30Q33 24 37 30L33 39Z" fill="#3e6375" />
      <Word y={56} size={5} fill="#609879">GAINARE</Word>
    </>
  ),
};

const flags: Record<string, React.ReactNode> = {
  日本: (
    <>
      <rect x="3.5" y="6.5" width="59" height="39" fill="#fff" stroke="#d8d8d8" />
      <circle cx="33" cy="26" r="12.5" fill="#d9001f" />
    </>
  ),
  中国: (
    <>
      <rect x="3" y="6" width="60" height="40" fill="#fa230c" />
      <path d="M12 11L13.5 15.5H18L14.5 18L16 22.5L12 20L8 22.5L9.5 18L6 15.5H10.5Z" fill="#fcdf20" />
      <path d="M22 9V12M27 13V16M27 19V22M22 23V26" stroke="#e1a61e" strokeWidth="3" />
    </>
  ),
};

type Match = [home: string, time: string, venue: string, away: string];

const j2: Match[] = [
  ['秋田', '18:03', 'ソユスタ', '熊本'],
  ['いわき', '18:03', 'ハワスタ', '長崎'],
  ['水戸', '18:03', 'Ｋｓスタ', '富山'],
  ['今治', '18:08', 'アシさと', '愛媛'],
  ['甲府', '18:33', 'ＪＩＴス', '大宮'],
  ['山形', '19:03', 'ＮＤスタ', '千葉'],
  ['藤枝', '19:03', '藤枝サ', '仙台'],
  ['山口', '19:03', 'みらスタ', '徳島'],
  ['鳥栖', '19:03', '駅スタ', '大分'],
  ['磐田', '19:33', 'ヤマハ', '札幌'],
];

const j3: Match[] = [
  ['相模原', '18:03', 'ギオンス', '福島'],
  ['松本', '18:03', 'サンアル', '奈良'],
  ['沼津', '18:03', '愛鷹', '鹿児島'],
  ['FC大阪', '18:03', '花園', '宮崎'],
  ['讃岐', '18:03', 'ピカスタ', '栃木SC'],
  ['高知', '18:03', '春野陸', '金沢'],
  ['北九州', '18:03', 'ミクスタ', '栃木Ｃ'],
  ['八戸', '18:33', 'プラスタ', '岐阜'],
  ['群馬', '19:03', '正田スタ', '長野'],
  ['琉球', '19:03', '沖縄県陸', '鳥取'],
];

const eaff: Match[] = [['日本', '19:24', '龍仁ミル', '中国']];

const tabs = ['見どころ', 'スタメン', '試合経過', 'テキスト速報', '選手コメント', '監督コメント'];
const openTabs = ['見どころ', 'スタメン', 'テキスト速報'];

const TeamCell: React.FC<{ name: string }> = ({ name }) => {
  // flags are shorter than club crests, so the name sits higher
  const height = flags[name] ? 58 : 66;
  return (
    <Team>
      <svg width="66" height={height} viewBox={`0 0 66 ${height}`}>
        {flags[name] ?? crests[name]}
      </svg>
      {name}
    </Team>
  );
};

const MatchCard: React.FC<{ match: Match; channels: string[]; active: string[] }> = ({ match, channels, active }) => {
  const [home, time, venue, away] = match;
  return (
    <Card>
      <Summary>
        <TeamCell name={home} />
        <Kickoff>
          <Time>{time}</Time>
          <Venue>[ {venue} ]</Venue>
        </Kickoff>
        <TeamCell name={away} />
        <Broadcasts>
          {channels.map((channel) => (
            <Broadcaster key={channel}>{channel}</Broadcaster>
          ))}
        </Broadcasts>
      </Summary>
      <Tabs>
        {tabs.map((tab) => (
          <Tab key={tab} $active={active.includes(tab)}>
            {tab}
          </Tab>
        ))}
      </Tabs>
    </Card>
  );
};

const Badge: React.FC<{ color: string; league: string }> = ({ color, league }) => (
  <LeagueBadge $color={color}>
    <svg width="31" height="35" viewBox="0 0 31 35">
      <path d="M1 1H30V18Q29 34 15.500 34Q2 34 1 18Z" fill="#231816" stroke="#d9ded9" strokeWidth="1.5" />
      <path d="M2 2H13V16H2Z" fill="#fff" />
      <circle cx="21.500" cy="25" r="4.300" fill="#d7000f" />
      <circle cx="16" cy="19" r="4.500" fill="#fff" />
    </svg>
    <div>
      明治安田 <b>{league}</b>
    </div>
  </LeagueBadge>
);

const More: React.FC<{ children: string }> = ({ children }) => (
  <MoreLink>
    {children}
    <svg width="10" height="18" viewBox="0 0 10 18">
      <path d="M2 1.500L8 9L2 16.500" fill="none" stroke="#333" strokeWidth="2.200" />
    </svg>
  </MoreLink>
);

const App: React.FC = () => (
  <>
    <GlobalStyle />
    <Page>
      <TitleBar>
        <Title>Ｊリーグの試合速報一覧</Title>
      </TitleBar>
      <Toolbar>
        <Toggle>
          <ToggleItem $active>
            自動更新<span>(60秒)</span>
          </ToggleItem>
          <ToggleItem>手動更新</ToggleItem>
        </Toggle>
        <Shares>
          <PostBack>
            <PostButton>
              <svg width="19" height="20" viewBox="0 0 19 20">
                <path d="M1 1H6L18 19H13ZM17 1L10.500 8.500M8 11.500L1.500 19" fill="none" stroke="#fff" strokeWidth="1.200" />
              </svg>
              ポスト
            </PostButton>
          </PostBack>
          <FacebookBack>
            <FacebookButton $width={181}>
              <svg width="23" height="24" viewBox="0 0 23 24">
                <path d="M0 11H6V23H0ZM8 11L13 6V1Q17 0 17 5L16 9H21Q24 10 22 13Q23 15 21 16Q22 18 20 19Q20 22 17 22H11L8 21Z" fill="#fff" />
              </svg>
              いいね！<em>655</em>
            </FacebookButton>
            <FacebookButton $width={129}>シェアする</FacebookButton>
          </FacebookBack>
          <Hatena>B!</Hatena>
        </Shares>
      </Toolbar>
      <DateHeading>2025年7月12日(土)</DateHeading>

      <Section>
        <SectionHeader>
          明治安田Ｊ２リーグ　第23節
          <Badge color="#04803f" league="J2 LEAGUE" />
        </SectionHeader>
        <Cards>
          {j2.map((match) => (
            <MatchCard key={match[0]} match={match} channels={['DAZN']} active={openTabs} />
          ))}
        </Cards>
        <More>明治安田Ｊ２リーグ順位表はこちら</More>
      </Section>

      <Section>
        <SectionHeader>
          明治安田Ｊ３リーグ　第20節
          <Badge color="#0862b0" league="J3 LEAGUE" />
        </SectionHeader>
        <Cards>
          {j3.map((match) => (
            <MatchCard key={match[0]} match={match} channels={['Lemino', 'DAZN']} active={openTabs} />
          ))}
        </Cards>
        <More>明治安田Ｊ３リーグ順位表はこちら</More>
      </Section>

      <Section>
        <SectionHeader>EAFF E-1サッカー選手権</SectionHeader>
        <Cards>
          {eaff.map((match) => (
            <MatchCard key={match[0]} match={match} channels={['フジテレビ']} active={['見どころ']} />
          ))}
        </Cards>
        <More>EAFF E-1サッカー選手権 特集サイトはこちら</More>
      </Section>

      <PageBreak />
    </Page>
  </>
);

export default App;
